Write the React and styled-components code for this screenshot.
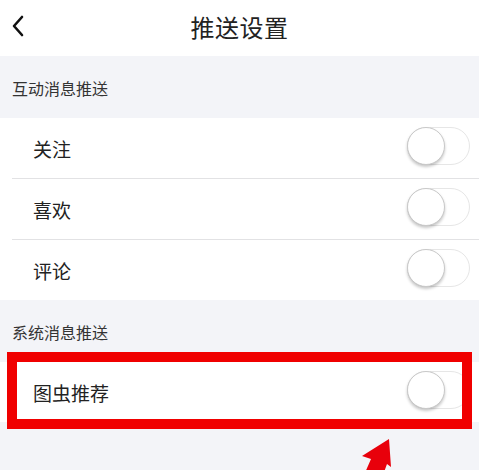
import React from 'react'
import styled, { createGlobalStyle } from 'styled-components'

const GlobalStyle = createGlobalStyle`
  html, body {
    margin: 0;
    padding: 0;
    background: #f3f4f8;
    font-family: "Noto Sans CJK SC", "Noto Sans", sans-serif;
  }
`

const interactive = ['关注', '喜欢', '评论']

const App = () => {
  return (
    <Page>
      <GlobalStyle />
      <Header>
        <BackButton>
          <svg width="14" height="22" viewBox="0 0 14 22">
            <path d="M11 2 L3 11 L11 20" fill="none" stroke="#111" strokeWidth="2.6" strokeLinecap="round" strokeLinejoin="round" />
          </svg>
        </BackButton>
        <Title>推送设置</Title>
      </Header>

      <SectionTitle>互动消息推送</SectionTitle>
      <Group>
        {interactive.map((label, i) => (
          <Row key={label} divider={i < interactive.length - 1}>
            <Label>{label}</Label>
            <Toggle />
          </Row>
        ))}
      </Group>

      <SectionTitle>系统消息推送</SectionTitle>
      <Group>
        <Row>
          <Label>图虫推荐</Label>
          <Toggle />
          <Highlight />
        </Row>
      </Group>

      <ArrowWrap>
        <svg width="40" height="36" viewBox="0 0 40 36">
          <polygon points="33,0 6,17 15,20 8,36 27,36 31,25 35,28" fill="#e8000b" />
        </svg>
      </ArrowWrap>
    </Page>
  )
}

export default App

const Page = styled.div`
  width: 479px;
  height: 470px;
  overflow: hidden;
  background: #f3f4f8;
  position: relative;
`

const Header = styled.div`
  height: 56px;
  background: #fff;
  display: flex;
  align-items: center;
  justify-content: center;
  position: relative;
`

const BackButton = styled.div`
  position: absolute;
  left: 11px;
  top: 15px;
  display: flex;
`

const Title = styled.div`
  font-size: 24px;
  color: #222;
  letter-spacing: 0.5px;
  margin-top: -4px;
`

const SectionTitle = styled.div`
  height: 62px;
  display: flex;
  align-items: center;
  padding-left: 12px;
  font-size: 16px;
  color: #333;
  padding-top: 2px;
  box-sizing: border-box;
`

const Group = styled.div`
  background: #fff;
`

const Row = styled.div`
  height: 60px;
  display: flex;
  align-items: center;
  justify-content: space-between;
  padding: 0 9px 0 33px;
  position: relative;
  box-sizing: content-box;
  border-bottom: ${p => (p.divider ? '1px solid #e2e2e4' : 'none')};
  ${p => p.divider && `
    border-bottom: none;
    &::after {
      content: '';
      position: absolute;
      left: 12px;
      right: 0;
      bottom: -1px;
      height: 1px;
      background: #e2e2e4;
    }
    margin-bottom: 1px;
  `}
`

const Label = styled.div`
  font-size: 19px;
  color: #222;
`

const Toggle = styled.div`
  width: 63px;
  height: 38px;
  border-radius: 19px;
  border: 1px solid #e6e6e6;
  box-sizing: border-box;
  background: #fff;
  position: relative;
  margin-top: -4px;

  &::before {
    content: '';
    position: absolute;
    left: -1px;
    top: -1px;
    width: 36px;
    height: 36px;
    border-radius: 50%;
    background: #fff;
    border: 1px solid #c9c9c9;
    box-shadow: 0 2px 3px rgba(0, 0, 0, 0.22);
  }
`

const Highlight = styled.div`
  position: absolute;
  top: -10px;
  bottom: -7px;
  left: 7px;
  right: 7px;
  border: 10px solid #f00000;
  pointer-events: none;
`

const ArrowWrap = styled.div`
  position: absolute;
  left: 356px;
  top: 439px;
  display: flex;
`
